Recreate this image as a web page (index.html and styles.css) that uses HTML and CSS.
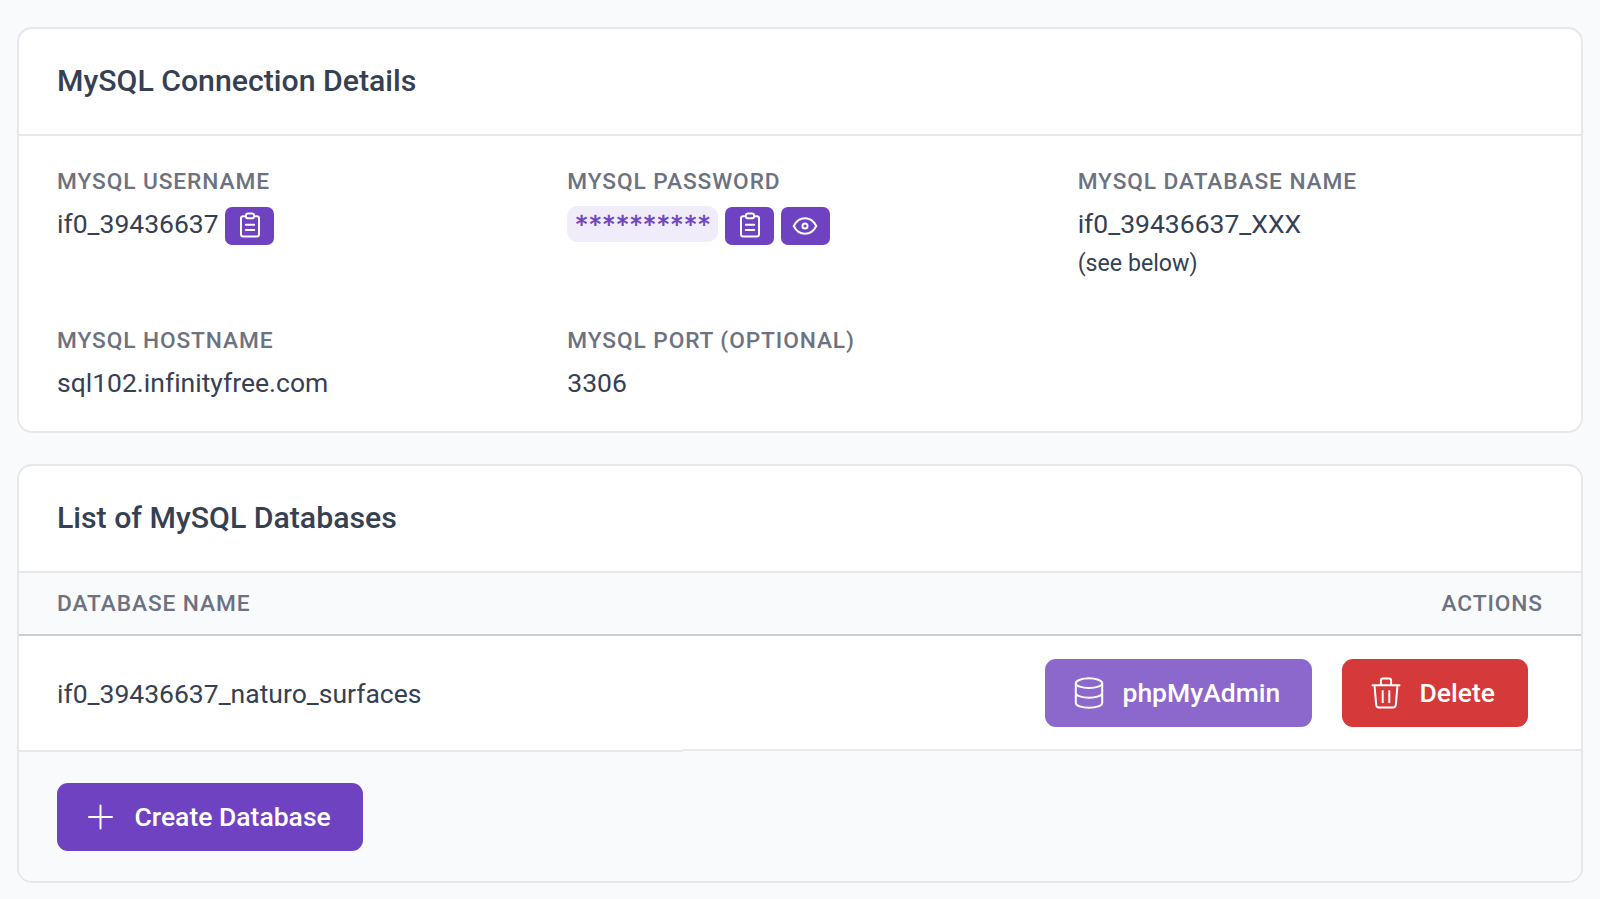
FILE: index.html
```html
<!DOCTYPE html>
<html lang="en">
<head>
<meta charset="utf-8">
<title>MySQL Databases</title>
<link rel="stylesheet" href="styles.css">
</head>
<body>
<svg class="sprite" aria-hidden="true">
  <symbol id="clipboard" viewBox="0 0 22 28">
    <path d="M6 4.300H4.300a2.300 2.300 0 0 0-2.300 2.300V22.300a2.300 2.300 0 0 0 2.300 2.300H17.700a2.300 2.300 0 0 0 2.300-2.300V6.600a2.300 2.300 0 0 0-2.300-2.300H16"/>
    <rect x="6.800" y="1.500" width="8.400" height="4.800" rx="2.400"/>
    <path d="M6.800 12.700h8.400M6.800 17.900h8.400"/>
  </symbol>
</svg>
<main class="page">
  <section class="card details">
    <h2 class="card-title">MySQL Connection Details</h2>
    <dl class="grid">
      <div class="item">
        <dt class="label">MySQL Username</dt>
        <dd class="value">if0_39436637
          <button class="mini" aria-label="Copy username"><svg class="clip"><use href="#clipboard"/></svg></button>
        </dd>
      </div>
      <div class="item">
        <dt class="label">MySQL Password</dt>
        <dd class="value"><code class="secret">**********</code>
          <button class="mini" aria-label="Copy password"><svg class="clip"><use href="#clipboard"/></svg></button>
          <button class="mini" aria-label="Show password"><svg class="eye" viewBox="0 0 26 20"><path d="M1.700 10C4 5.500 8.200 2.200 13 2.200S22 5.500 24.300 10C22 14.500 17.800 17.800 13 17.800S4 14.500 1.700 10z"/><circle cx="13" cy="10" r="2.500"/></svg></button>
        </dd>
      </div>
      <div class="item">
        <dt class="label">MySQL Database Name</dt>
        <dd class="value">if0_39436637_XXX</dd>
        <dd class="note">(see below)</dd>
      </div>
      <div class="item">
        <dt class="label">MySQL Hostname</dt>
        <dd class="value">sql102.infinityfree.com</dd>
      </div>
      <div class="item">
        <dt class="label">MySQL Port (optional)</dt>
        <dd class="value">3306</dd>
      </div>
    </dl>
  </section>

  <section class="card list">
    <h2 class="card-title">List of MySQL Databases</h2>
    <div class="table-head label"><span>Database Name</span><span>Actions</span></div>
    <div class="row">
      <div class="cell name">if0_39436637_naturo_surfaces</div>
      <div class="cell actions">
        <button class="btn admin"><svg class="icon" viewBox="0 0 32 32"><ellipse cx="16" cy="6.200" rx="13.200" ry="4.900"/><path d="M2.800 6.200V26c0 2.700 5.900 4.700 13.200 4.700S29.200 28.700 29.200 26V6.200M2.800 16c0 2.700 5.900 4.700 13.200 4.700S29.200 18.700 29.200 16"/></svg><span>phpMyAdmin</span></button>
        <button class="btn danger"><svg class="icon" viewBox="0 0 32 32"><path d="M2.500 8.300h27M10.900 8.300V3.400a2 2 0 0 1 2-2h6.200a2 2 0 0 1 2 2v4.900M4.500 8.300l1.700 19.700a2.900 2.900 0 0 0 2.900 2.600h13.800a2.900 2.900 0 0 0 2.900-2.600l1.700-19.700M12.700 14v11.300M19.300 14v11.300"/></svg><span>Delete</span></button>
      </div>
    </div>
    <div class="footer">
      <button class="btn primary"><svg class="icon" viewBox="0 0 32 32"><path d="M15.500 4.500v23M4 16h23"/></svg><span>Create Database</span></button>
    </div>
  </section>
</main>
</body>
</html>
```
FILE: styles.css
```css
* { box-sizing: border-box; }

body {
  margin: 0;
  background: #f9fafc;
  color: #354052;
  font: 400 26.500px/38px Roboto, sans-serif;
  font-variant-ligatures: none;
}

.sprite { display: block; width: 0; height: 0; }

.page {
  display: flex;
  flex-direction: column;
  gap: 31px;
  padding: 27px 17px 0;
}

.card {
  border: 2px solid #e6e8ec;
  border-radius: 15px;
  background: #fff;
  overflow: hidden;
}

.details { height: 406px; }
.list { height: 419px; }

.card-title {
  height: 107px;
  margin: 0;
  padding: 32px 38px;
  border-bottom: 2px solid #e6e8ec;
  font-size: 30.240px;
  line-height: 40px;
  font-weight: 500;
}

.grid {
  display: grid;
  grid-template-columns: repeat(3, 1fr);
  grid-template-rows: 159px auto;
  column-gap: 45px;
  margin: 0;
  padding: 31px 38px 0;
}

.label {
  color: #6c7280;
  font-size: 22.700px;
  line-height: 30px;
  font-weight: 500;
  letter-spacing: 0.910px;
  text-transform: uppercase;
}

.value {
  display: flex;
  align-items: center;
  gap: 6.500px;
  height: 38px;
  margin: 8px 0 0;
}

.note {
  margin: 1px 0 0;
  font-size: 23.200px;
}

.secret {
  height: 36px;
  margin-bottom: 1px;
  padding: 0 7.500px;
  border-radius: 11px;
  background: #f0ecf9;
  color: #6f42c1;
  font: 400 22.600px/36px "DejaVu Sans Mono", monospace;
  -webkit-text-stroke: 0.700px #6f42c1;
}

.mini {
  display: flex;
  align-items: center;
  justify-content: center;
  width: 49.300px;
  height: 38px;
  margin-top: 4px;
  padding: 0;
  border: 0;
  border-radius: 7px;
  background: #6f42c1;
}

svg {
  fill: none;
  stroke: #fff;
  stroke-width: 2;
  stroke-linecap: round;
  stroke-linejoin: round;
}

.clip { width: 22px; height: 28px; }
.eye { width: 26px; height: 20px; }
.icon { width: 32px; height: 32px; }

.table-head {
  display: flex;
  justify-content: space-between;
  height: 63px;
  padding: 16px 38px 15px;
  border-bottom: 2px solid #cbced5;
  background: #f9fafc;
}

.row {
  display: flex;
  align-items: flex-start;
  height: 116px;
  background: #f9fafc;
}

.cell {
  display: flex;
  align-items: center;
  border-bottom: 2px solid #e6e8ec;
  background: #fff;
}

.name {
  width: 664px;
  height: 116px;
  padding: 2px 0 0 38px;
}

.actions {
  flex: 1;
  gap: 30px;
  justify-content: flex-end;
  height: 115px;
  padding-right: 53px;
}

.btn {
  display: flex;
  align-items: center;
  gap: 17.500px;
  height: 68px;
  padding: 0 30px 0 28px;
  border: 0;
  border-radius: 11px;
  color: #fff;
  font: 500 26.500px/38px Roboto, sans-serif;
}

.admin { width: 267px; background: #8c68cd; }
.danger { width: 186px; background: #d63939; }
.primary { width: 306px; background: #6f42c1; }

.footer {
  height: 130px;
  padding: 31px 38px;
  background: #f9fafc;
}
```
